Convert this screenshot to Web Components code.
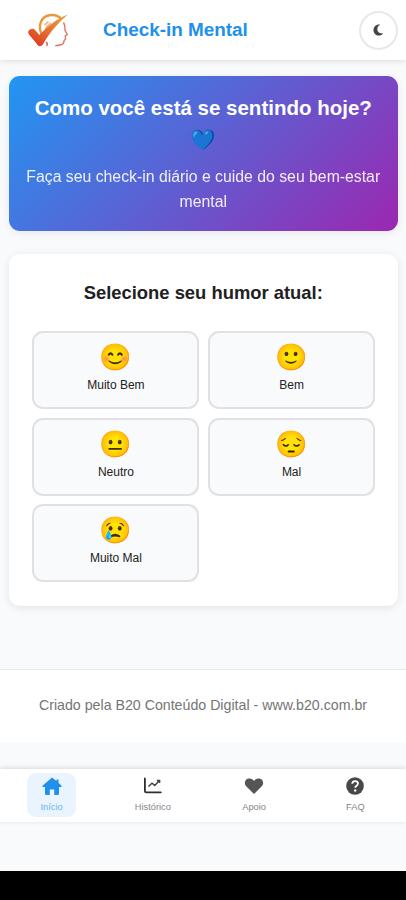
<!DOCTYPE html>
<html lang="pt-BR">
<head>
<meta charset="UTF-8">
<meta name="viewport" content="width=device-width, initial-scale=1">
<title>Check-in Mental</title>
<style>
    :root {
        --primary: #2090ea;
        --surface: #fff;
        --background: #f8fafc;
        --border: #e0e1e4;
        --text: #212121;
        --muted: #757575;
    }

    body {
        margin: 0;
        background: var(--background);
        color: var(--text);
        font-family: "Liberation Sans", Arial, "Noto Color Emoji", sans-serif;
    }
</style>
</head>
<body>
<mental-app></mental-app>

<script>
/**
 * Base class: clones the markup of the component into its shadow root
 */
class BaseElement extends HTMLElement {
    connectedCallback() {
        if (this.shadowRoot) return;
        const template = document.createElement('template');
        template.innerHTML = this.render();
        this.attachShadow({ mode: 'open' });
        this.shadowRoot.appendChild(template.content.cloneNode(true));
    }
}

class AppHeader extends BaseElement {
    render() {
        return `
            <style>
                :host {
                    display: flex;
                    align-items: center;
                    height: 60px;
                    padding: 0 8px 0 27px;
                    box-sizing: border-box;
                    background: var(--surface);
                    box-shadow: 0 1px 6px rgba(0, 0, 0, .12);
                }
                .logo { width: 42px; height: 36px; margin-right: 34px; }
                h1 {
                    flex: 1;
                    margin: 0;
                    color: var(--primary);
                    font-size: 18.9px;
                    line-height: 24px;
                    white-space: nowrap;
                }
                button {
                    display: flex;
                    align-items: center;
                    justify-content: center;
                    width: 39px;
                    height: 39px;
                    padding: 0;
                    border: 2px solid #e8e8e8;
                    border-radius: 50%;
                    background: var(--surface);
                }
            </style>
            <svg class="logo" viewBox="0 0 42 36">
                <defs>
                    <linearGradient id="check" x1="1" y1="0" x2="0.2" y2="1">
                        <stop offset="0" stop-color="#eda642"/>
                        <stop offset=".55" stop-color="#e8702f"/>
                        <stop offset="1" stop-color="#db3b26"/>
                    </linearGradient>
                </defs>
                <path d="M14.500 22C11 14 13.500 4.500 22.500 3.200c5-.6 9 .8 11.500 3.300" fill="none" stroke="#eb983c" stroke-width="2.400"/>
                <path d="M36.500 10.500c2 3 1.500 6 1.500 8l2.300 4-2 1.300.2 3-1.500 2c0 3-1.500 4-4.200 4.200l-4.500.8" fill="none" stroke="#de7264" stroke-width="1.400" stroke-linejoin="round"/>
                <path d="M19 30c1.500 1 1.500 2.500.7 4" fill="none" stroke="#de7264" stroke-width="1.600"/>
                <path d="M17.500 13l4-3.500M19 15.500l5-4.500M18 17.500l3-2.500" stroke="#edb98b" stroke-width="1.700"/>
                <path d="M1.500 19c1.500-2.500 5-3 6.500-1l4.500 5C20 15 29 7 41 2.500 31 11 23 20 16.500 31.500c-2 3.500-5 3.500-7 0L2 22.500c-1-1.200-1-2.500-.5-3.500z" fill="url(#check)"/>
            </svg>
            <h1><slot></slot></h1>
            <button aria-label="Alternar tema">
                <svg width="11" height="12" viewBox="0 0 11 12">
                    <path d="M6 .4C2.800.4.5 2.800.5 6s2.300 5.600 5.500 5.600c1.700 0 3-.6 3.900-1.800.2-.3 0-.6-.3-.5C6.600 9.800 4.300 8 4.300 5.300c0-1.800.9-3.200 2.500-4.200.3-.2.2-.6-.1-.6z" fill="#444"/>
                </svg>
            </button>
        `;
    }
}

class WelcomeBanner extends BaseElement {
    render() {
        return `
            <style>
                :host {
                    display: block;
                    height: 155px;
                    padding: 16px 16px 0;
                    box-sizing: border-box;
                    border-radius: 11px;
                    background: linear-gradient(135deg, #2196f3, #9c27b0);
                    box-shadow: 0 2px 8px rgba(0, 0, 0, .08);
                    color: #fff;
                    text-align: center;
                }
                h2 { margin: 0 0 8px; font-size: 20.5px; line-height: 32px; }
                p { margin: 0; font-size: 15.8px; line-height: 25px; opacity: .9; }
            </style>
            <h2><slot name="title"></slot></h2>
            <p><slot></slot></p>
        `;
    }
}

class MoodOption extends BaseElement {
    render() {
        return `
            <style>
                :host { display: block; }
                button {
                    display: flex;
                    flex-direction: column;
                    align-items: center;
                    width: 100%;
                    height: 78px;
                    padding: 7px 0 0 1px;
                    border: 2px solid var(--border);
                    border-radius: 11px;
                    background: var(--background);
                    color: var(--text);
                    font-family: inherit;
                }
                .face { font-size: 26px; line-height: 34px; filter: saturate(1.25); }
                .label { margin-top: 2px; font-size: 12px; line-height: 18px; }
            </style>
            <button>
                <span class="face">${this.getAttribute('face')}</span>
                <span class="label"><slot></slot></span>
            </button>
        `;
    }
}

class MoodCard extends BaseElement {
    render() {
        return `
            <style>
                :host {
                    display: block;
                    height: 352px;
                    padding: 24px 23.5px 0;
                    box-sizing: border-box;
                    border-radius: 11px;
                    background: var(--surface);
                    box-shadow: 0 2px 9px rgba(0, 0, 0, .09);
                }
                h3 { margin: 0 0 23px; font-size: 18.4px; line-height: 30px; text-align: center; }
                .grid { display: grid; grid-template-columns: 1fr 1fr; gap: 8.7px; }
            </style>
            <h3><slot name="title"></slot></h3>
            <div class="grid"><slot></slot></div>
        `;
    }
}

class AppFooter extends BaseElement {
    render() {
        return `
            <style>
                :host {
                    display: block;
                    height: 73px;
                    box-sizing: border-box;
                    border-top: 1px solid #e6e8ea;
                    background: var(--surface);
                    color: var(--muted);
                    font-size: 14.2px;
                    line-height: 71px;
                    text-align: center;
                }
            </style>
            <slot></slot>
        `;
    }
}

const icons = {
    home: '<path d="M10 .5L.5 8.800c-.5.600-.1 1.200.5 1.200H3v6.800c0 .7.500 1.200 1.200 1.200h3.600v-5.500h4.400V18h3.600c.7 0 1.200-.5 1.200-1.200V10h2c.6 0 1-.6.500-1.200L16.500 5.800V2.500H14.500v1.500z" fill="#2090ea"/>',
    chart: '<path d="M1.900 1.500V13.700c0 1 .6 1.600 1.600 1.600H17.800" fill="none" stroke="#2f2f2f" stroke-width="1.800" stroke-linecap="round"/><path d="M5.500 9.500l3.500-3.300 2.800 2.200 4.600-4.900M13.800 3.400h2.800v2.600" fill="none" stroke="#444" stroke-width="1.500"/>',
    heart: '<path d="M10 17L2.200 9.300C-.2 6.800.8 2.200 4.600 1.600 7 1.200 8.900 2.200 10 4c1.100-1.800 3-2.800 5.400-2.400 3.800.6 4.800 5.200 2.400 7.700z" fill="#555"/>',
    help: '<circle cx="10" cy="9" r="8.800" fill="#484848"/><path d="M7.200 6.700c.1-1.700 1.300-2.600 2.900-2.600 1.700 0 2.900 1 2.900 2.500 0 2.200-2.800 2.100-2.800 4.200" fill="none" stroke="#fff" stroke-width="1.800"/><circle cx="10.200" cy="13.500" r="1.200" fill="#fff"/>'
};

class NavItem extends BaseElement {
    render() {
        return `
            <style>
                :host { display: flex; flex: 1; justify-content: center; }
                a {
                    display: flex;
                    flex-direction: column;
                    align-items: center;
                    height: 44px;
                    min-width: 49px;
                    padding-top: 4px;
                    box-sizing: border-box;
                    border-radius: 9px;
                    color: #858585;
                    font-size: 9.3px;
                    line-height: 12px;
                }
                :host([active]) a { background: #e9f4fe; color: #64b5ef; }
                svg { width: 20px; height: 19px; margin-bottom: 5px; }
            </style>
            <a>
                <svg viewBox="0 0 20 19">${icons[this.getAttribute('icon')]}</svg>
                <slot></slot>
            </a>
        `;
    }
}

class BottomNav extends BaseElement {
    render() {
        return `
            <style>
                :host {
                    display: flex;
                    height: 53px;
                    padding: 4px 0 0 1px;
                    box-sizing: border-box;
                    background: var(--surface);
                    box-shadow: 0 -1px 5px rgba(0, 0, 0, .14);
                }
            </style>
            <slot></slot>
        `;
    }
}

class MentalApp extends BaseElement {
    render() {
        return `
            <style>
                :host { display: flex; flex-direction: column; height: 900px; overflow: hidden; }
                main { display: flex; flex-direction: column; gap: 23px; padding: 16px 8px 63px 8.5px; }
                bottom-nav { margin-top: 27px; }
                .system-bar { height: 29px; margin-top: auto; background: #000; }
            </style>
            <app-header>Check-in Mental</app-header>
            <main>
                <welcome-banner>
                    <span slot="title">Como você está se sentindo hoje? 💙</span>
                    Faça seu check-in diário e cuide do seu bem-estar mental
                </welcome-banner>
                <mood-card>
                    <span slot="title">Selecione seu humor atual:</span>
                    <mood-option face="😊">Muito Bem</mood-option>
                    <mood-option face="🙂">Bem</mood-option>
                    <mood-option face="😐">Neutro</mood-option>
                    <mood-option face="😔">Mal</mood-option>
                    <mood-option face="😢">Muito Mal</mood-option>
                </mood-card>
            </main>
            <app-footer>Criado pela B20 Conteúdo Digital - www.b20.com.br</app-footer>
            <bottom-nav>
                <nav-item icon="home" active>Início</nav-item>
                <nav-item icon="chart">Histórico</nav-item>
                <nav-item icon="heart">Apoio</nav-item>
                <nav-item icon="help">FAQ</nav-item>
            </bottom-nav>
            <div class="system-bar"></div>
        `;
    }
}

// Register Elements
customElements.define('app-header', AppHeader);
customElements.define('welcome-banner', WelcomeBanner);
customElements.define('mood-option', MoodOption);
customElements.define('mood-card', MoodCard);
customElements.define('app-footer', AppFooter);
customElements.define('nav-item', NavItem);
customElements.define('bottom-nav', BottomNav);
customElements.define('mental-app', MentalApp);
</script>
</body>
</html>
